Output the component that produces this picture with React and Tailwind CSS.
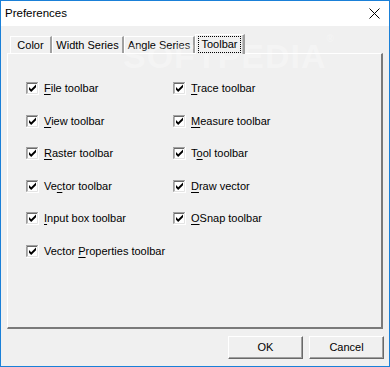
import React from "react";

const font = { fontFamily: '"Liberation Sans", Arial, sans-serif' };

function CheckBox() {
    return (
        <svg width="13" height="13" viewBox="0 0 13 13" className="shrink-0">
            <rect x="0" y="0" width="13" height="13" fill="#ffffff" />
            <path d="M0 12.5V0.5H12.5" stroke="#a0a0a0" fill="none" />
            <path d="M1 11.5V1.5H11.5" stroke="#696969" fill="none" />
            <path d="M0.5 13V12.5H12.5V0" stroke="#ffffff" fill="none" />
            <path d="M1.5 11.5H11.5V1" stroke="#e3e3e3" fill="none" />
            <path d="M3 5L5.2 7.2L10 2.4V5.2L5.2 10L3 7.8Z" fill="#000000" />
        </svg>
    );
}

function Option({ pre, key_, post }) {
    return (
        <div className="flex items-center h-[13px] gap-[5px]">
            <CheckBox />
            <span className="text-[11px] text-black leading-none whitespace-nowrap">
                {pre}<span className="underline underline-offset-2">{key_}</span>{post}
            </span>
        </div>
    );
}

function Tab({ label, width, selected }) {
    if (selected) {
        return (
            <div
                className={`relative z-10 -mb-[1px] h-[20px] ${width} bg-[#f0f0f0] border-t border-l border-white border-r-2 border-r-[#a0a0a0] flex items-center justify-center`}
                style={{ boxShadow: "inset -1px 0 0 #c8c8c8" }}
            >
                <span className="text-[11px] leading-none px-[2px] py-[2px] border border-dotted border-black">
                    {label}
                </span>
            </div>
        );
    }
    return (
        <div
            className={`h-[17px] ${width} border-t border-l border-white border-r-2 border-r-[#a0a0a0] flex items-center justify-center`}
        >
            <span className="text-[11px] leading-none">{label}</span>
        </div>
    );
}

export default function App() {
    return (
        <div
            className="relative w-[390px] h-[367px] bg-[#f0f0f0] border border-[#1a80d8] flex flex-col overflow-hidden"
            style={font}
        >
            {/* title bar */}
            <div className="h-[25px] bg-white flex items-center justify-between pl-[4px] pr-[9px]">
                <span className="text-[11.5px] text-black">Preferences</span>
                <svg width="11" height="11" viewBox="0 0 11 11">
                    <path d="M0.5 0.5L10.5 10.5M10.5 0.5L0.5 10.5" stroke="#000" strokeWidth="1" />
                </svg>
            </div>

            {/* tabs */}
            <div className="h-[27px] flex items-end pl-[3px] mx-[6px]">
                <Tab label="Color" width="w-[42px]" />
                <Tab label="Width Series" width="w-[72px]" />
                <Tab label="Angle Series" width="w-[71px]" />
                <Tab label="Toolbar" width="w-[50px]" selected />
            </div>

            {/* panel */}
            <div className="mx-[6px] h-[276px] border-t border-l border-white border-r-2 border-b-2 border-r-[#7a7a7a] border-b-[#7a7a7a] pl-[18px] pt-[28px]">
                <div className="grid grid-cols-[147px_1fr] gap-y-[19.6px]">
                    <Option key_="F" post="ile toolbar" />
                    <Option key_="T" post="race toolbar" />
                    <Option key_="V" post="iew toolbar" />
                    <Option key_="M" post="easure toolbar" />
                    <Option key_="R" post="aster toolbar" />
                    <Option pre="T" key_="o" post="ol toolbar" />
                    <Option pre="Ve" key_="c" post="tor toolbar" />
                    <Option key_="D" post="raw vector" />
                    <Option key_="I" post="nput box toolbar" />
                    <Option key_="O" post="Snap toolbar" />
                    <Option pre="Vector " key_="P" post="roperties toolbar" />
                </div>
            </div>

            {/* buttons */}
            <div className="mt-[7px] flex justify-end gap-[6px] pr-[5px]">
                <button className="w-[75px] h-[23px] bg-[#f0f0f0] border border-white border-r-[#696969] border-b-[#696969] text-[11px] text-black"
                    style={{ boxShadow: "inset -1px -1px 0 #a0a0a0" }}>
                    OK
                </button>
                <button className="w-[75px] h-[23px] bg-[#f0f0f0] border border-white border-r-[#696969] border-b-[#696969] text-[11px] text-black"
                    style={{ boxShadow: "inset -1px -1px 0 #a0a0a0" }}>
                    Cancel
                </button>
            </div>

            {/* watermark */}
            <div className="absolute left-[122px] top-[30px] text-[34px] font-bold tracking-[1px] text-white/30 pointer-events-none select-none">
                SOFTPEDIA<span className="text-[10px] align-top">®</span>
            </div>
        </div>
    );
}
